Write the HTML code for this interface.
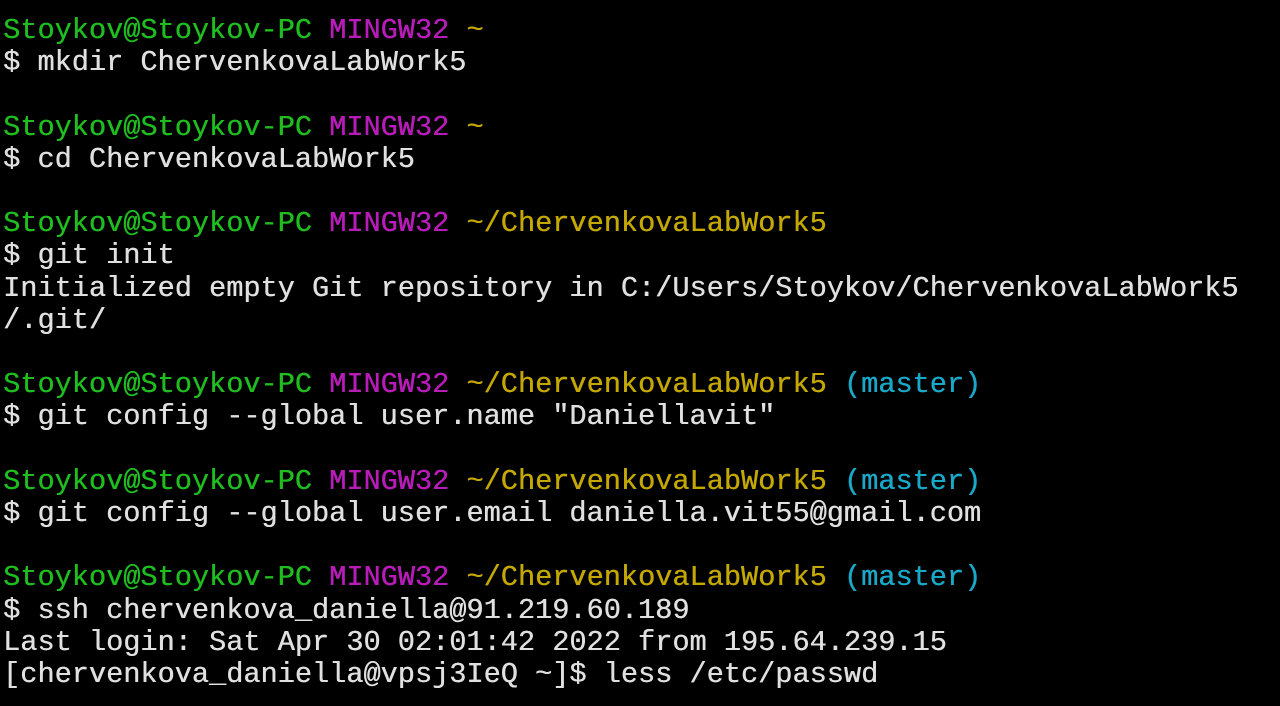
<!DOCTYPE html>
<html><head><meta charset="utf-8"><style>
html,body{margin:0;padding:0;background:#000;width:1280px;height:706px;overflow:hidden}
pre{margin:0;padding:15px 0 0 3px;font-family:"Liberation Mono",monospace;font-size:28.6px;line-height:32.2px;color:#e0e0e0;letter-spacing:0;text-shadow:0.4px 0 0 currentColor}
.g{color:#1fbd1f}.m{color:#b81cb8}.y{color:#c4a800}.c{color:#1aa8c8}
</style></head><body><pre><span class="g">Stoykov@Stoykov-PC</span> <span class="m">MINGW32</span> <span class="y">~</span>
$ mkdir ChervenkovaLabWork5

<span class="g">Stoykov@Stoykov-PC</span> <span class="m">MINGW32</span> <span class="y">~</span>
$ cd ChervenkovaLabWork5

<span class="g">Stoykov@Stoykov-PC</span> <span class="m">MINGW32</span> <span class="y">~/ChervenkovaLabWork5</span>
$ git init
Initialized empty Git repository in C:/Users/Stoykov/ChervenkovaLabWork5
/.git/

<span class="g">Stoykov@Stoykov-PC</span> <span class="m">MINGW32</span> <span class="y">~/ChervenkovaLabWork5</span> <span class="c">(master)</span>
$ git config --global user.name "Daniellavit"

<span class="g">Stoykov@Stoykov-PC</span> <span class="m">MINGW32</span> <span class="y">~/ChervenkovaLabWork5</span> <span class="c">(master)</span>
$ git config --global user.email daniella.vit55@gmail.com

<span class="g">Stoykov@Stoykov-PC</span> <span class="m">MINGW32</span> <span class="y">~/ChervenkovaLabWork5</span> <span class="c">(master)</span>
$ ssh chervenkova_daniella@91.219.60.189
Last login: Sat Apr 30 02:01:42 2022 from 195.64.239.15
[chervenkova_daniella@vpsj3IeQ ~]$ less /etc/passwd</pre></body></html>
